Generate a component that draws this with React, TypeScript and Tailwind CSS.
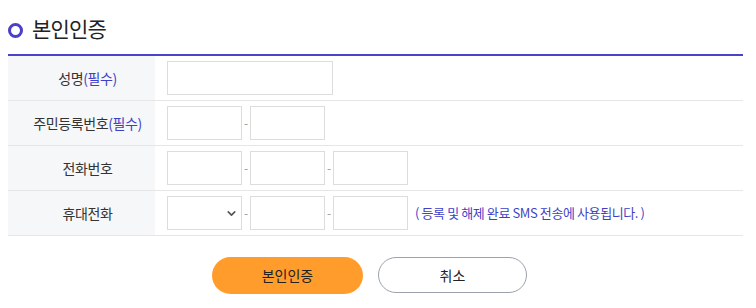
import { ChevronDown } from "lucide-react";

const font = { fontFamily: '"Noto Sans CJK KR", "Noto Sans", sans-serif' };

function Field({ w = "w-[75px]" }: { w?: string }) {
  return <input type="text" className={`${w} h-[34px] border border-[#dddddd] bg-white outline-none`} />;
}

function Dash() {
  return <span className="w-[8px] text-center text-[12px] leading-none text-[#999]">-</span>;
}

function Row({ label, required, children }: { label: string; required?: boolean; children: React.ReactNode }) {
  return (
    <div className="flex h-[45px] border-b border-[#e6e6e6]">
      <div className="flex w-[147px] items-center justify-center bg-[#f6f7f9] pl-[12px] text-[14px] tracking-[-0.4px] text-[#333]">
        {label}
        {required && <span className="text-[#3f3fc8]">(필수)</span>}
      </div>
      <div className="flex flex-1 items-center pl-[12px]">{children}</div>
    </div>
  );
}

export default function App() {
  return (
    <div className="min-h-screen bg-white px-[8px]" style={font}>
      <div className="w-[735px]">
        <div className="flex h-[54px] items-center gap-[9px] pt-[3px]">
          <span className="mt-[3px] h-[15px] w-[15px] rounded-full border-[3px] border-[#4b40c6]" />
          <h1 className="text-[21px] font-normal tracking-[-0.8px] text-[#222]">본인인증</h1>
        </div>
        <div className="border-t-2 border-[#4a43c7]">
          <Row label="성명" required>
            <Field w="w-[166px]" />
          </Row>
          <Row label="주민등록번호" required>
            <Field />
            <Dash />
            <Field />
          </Row>
          <Row label="전화번호">
            <Field />
            <Dash />
            <Field />
            <Dash />
            <Field />
          </Row>
          <Row label="휴대전화">
            <div className="relative h-[34px] w-[75px] border border-[#dddddd] bg-white">
              <ChevronDown className="absolute right-[3px] top-[10px] h-[13px] w-[13px] text-[#555]" strokeWidth={3} />
            </div>
            <Dash />
            <Field />
            <Dash />
            <Field />
            <span className="ml-[7px] text-[13px] tracking-[-0.4px] text-[#3f3fc8]">( 등록 및 해제 완료 SMS 전송에 사용됩니다. )</span>
          </Row>
        </div>
        <div className="flex justify-center gap-[15px] pr-[12px] pt-[21px]">
          <button type="button" className="h-[37px] w-[151px] rounded-full bg-[#ff9c2b] text-[14px] text-[#222]">
            본인인증
          </button>
          <button type="button" className="h-[36px] w-[149px] rounded-full border border-[#9ca1ab] bg-white text-[14px] text-[#222]">
            취소
          </button>
        </div>
      </div>
    </div>
  );
}
